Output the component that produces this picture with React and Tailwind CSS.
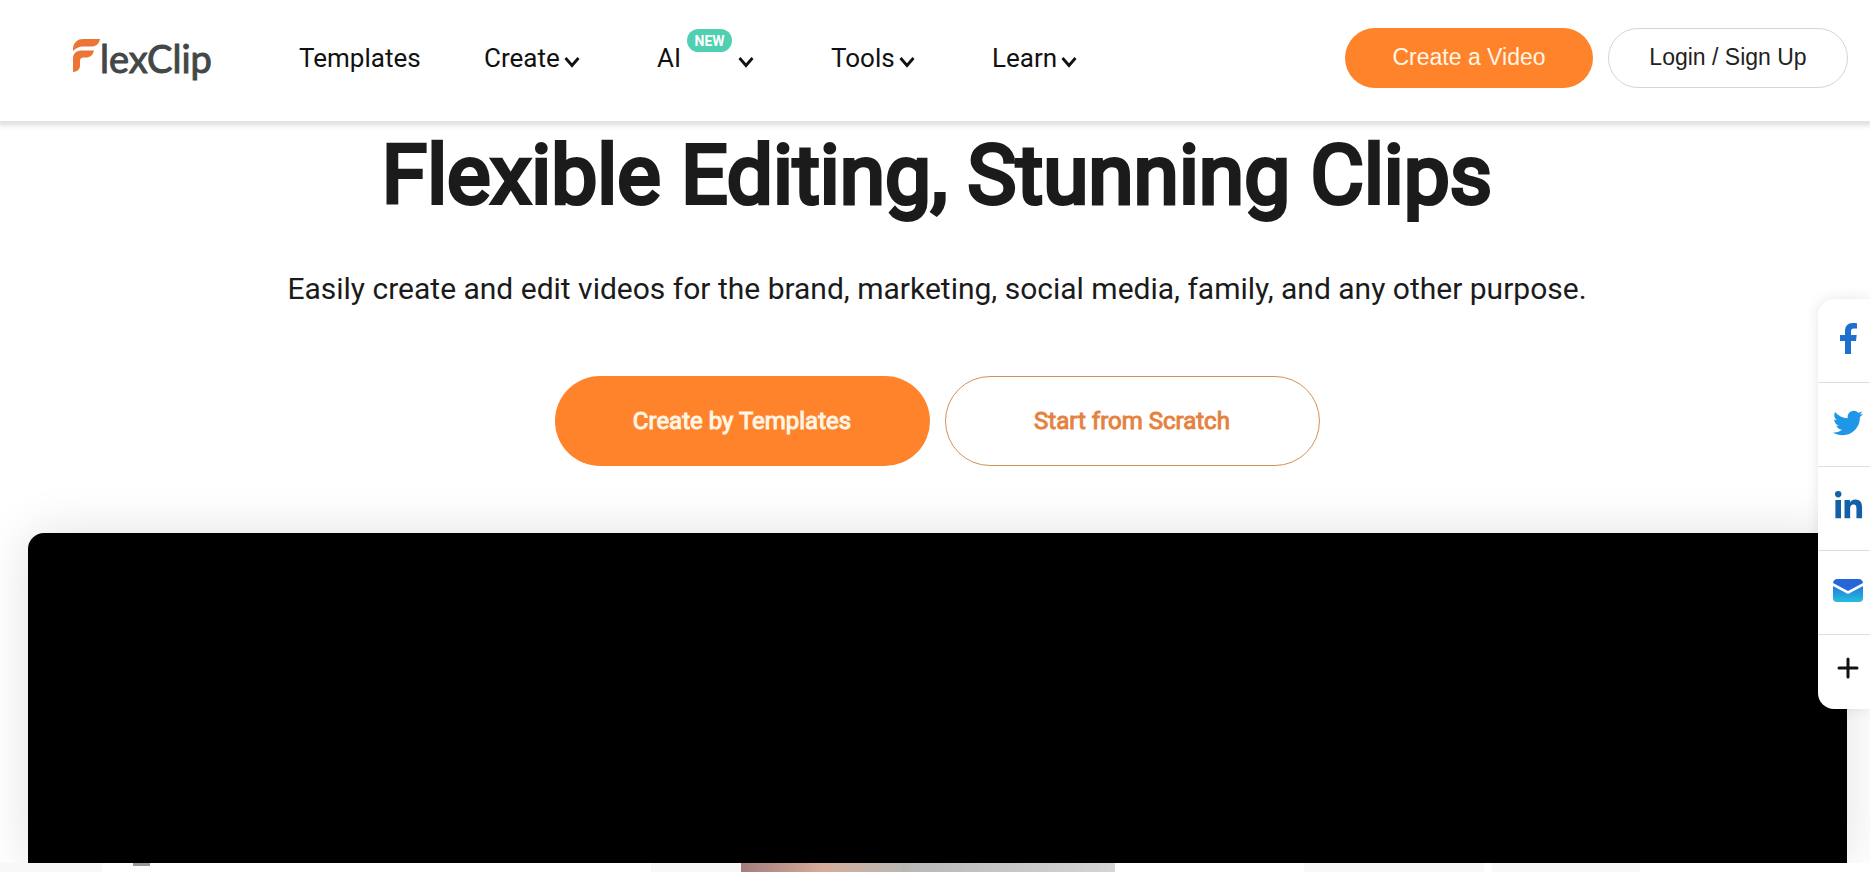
import { FaTwitter, FaLinkedinIn } from "react-icons/fa";

const menus = [
  { name: "Create", width: "w-[173px]" },
  { name: "AI", width: "w-[174px]", isNew: true },
  { name: "Tools", width: "w-[161px]" },
  { name: "Learn", width: "w-[86px]" },
];

const Chevron = () => (
  <svg className="w-4 h-3 mt-2" viewBox="0 0 16 12" fill="none" stroke="#111" strokeWidth="2.8">
    <path d="M1.5 2 8 9.5 14.5 2" />
  </svg>
);

const Logo = () => (
  <a href="#" aria-label="FlexClip" className="flex items-start w-[226px] shrink-0 text-[#434847]">
    <svg className="w-[27px] h-[34px] mt-[5px]" viewBox="0 0 27 34" fill="#ec7434">
      <path d="M0 12V9C1 3 5 0 10 0h17c-1 5-4 7.500-9 7.500h-8C6 7.500 3 9 0 12Z" />
      <path d="M0 33V20c0-5 3-8.500 8-8.500h13c-1 4.500-4 7-8 7h-2c-3 0-4 1-4 4V27c0 3-3 6-7 6Z" />
    </svg>
    <span className="font-[Lato,sans-serif] text-[38px] leading-[48px] [-webkit-text-stroke:1px_#434847]">lexClip</span>
  </a>
);

const FacebookIcon = () => (
  <svg className="w-[17px] h-[31px]" viewBox="0 0 17 31" fill="#1f6fd0">
    <path d="M5 31V18H0v-6h5V8c0-5 3-8 7.500-8 2 0 3.500.2 4.500.3V5.500h-3c-2.400 0-3 1.100-3 3V12h5.700L16 18h-5v13H5Z" />
  </svg>
);

const MailIcon = () => (
  <svg className="w-[30px] h-6" viewBox="0 0 30 24">
    <defs>
      <linearGradient id="mail" x1="0" y1="0" x2="0" y2="1">
        <stop offset="0" stopColor="#2878dc" />
        <stop offset="1" stopColor="#20c0dc" />
      </linearGradient>
    </defs>
    <path d="M0 4c0-2 2-4 4-4h22c2 0 4 2 4 4L15 12 0 4Z" fill="#2866d8" />
    <path d="M0 7l15 8 15-8v12c0 3-2 4-4 4H4c-2 0-4-1-4-4V7Z" fill="url(#mail)" />
  </svg>
);

const PlusIcon = () => (
  <svg className="w-[22px] h-[22px]" viewBox="0 0 22 22" stroke="#111" strokeWidth="3" strokeLinecap="round">
    <path d="M11 2v18M2 11h18" />
  </svg>
);

const shares = [
  { label: "Facebook", icon: <FacebookIcon /> },
  { label: "Twitter", icon: <FaTwitter className="w-[30px] h-[30px] text-[#1f97e6]" /> },
  { label: "LinkedIn", icon: <FaLinkedinIn className="w-[31px] h-[31px] text-[#1260a8]" /> },
  { label: "Email", icon: <MailIcon /> },
];

const Header = () => (
  <header className="relative z-10 flex items-start h-[121px] pl-[73px] pr-[22px] bg-white shadow-[0_3px_4px_2px_#e2e3e2]">
    <div className="pt-[34px]">
      <Logo />
    </div>
    <nav className="flex pt-[42px] text-[26px] leading-8 text-[#111]">
      <a href="#" className="w-[185px]">Templates</a>
      {menus.map((menu) => (
        <div key={menu.name} className={menu.width}>
          <button type="button" className="flex items-center gap-1 whitespace-nowrap">
            {menu.name}
            {menu.isNew && (
              <span className="-mt-9 mx-0.5 w-[45px] h-[23px] rounded-full bg-[#50d0b0] text-white text-sm leading-6 font-bold text-center">
                NEW
              </span>
            )}
            <Chevron />
          </button>
        </div>
      ))}
    </nav>
    <div className="flex gap-[15px] ml-auto pt-7 font-['Liberation_Sans',Arial,sans-serif] text-[23px]">
      <button type="button" className="w-[248px] h-[60px] pb-0.5 rounded-full bg-[#ff832b] text-[#fff6e6]">
        Create a Video
      </button>
      <button type="button" className="w-[240px] h-[60px] pb-0.5 rounded-full border border-[#d5d5d5] bg-white text-[#222]">
        Login / Sign Up
      </button>
    </div>
  </header>
);

const ShareBar = () => (
  <aside className="absolute z-20 right-0 top-[299px] w-[52px] rounded-l-2xl bg-white shadow-[0_0_14px_rgba(0,0,0,0.1)]">
    {shares.map((share) => (
      <a
        key={share.label}
        href="#"
        aria-label={share.label}
        className="flex items-center justify-center h-[84px] pl-2 pb-1 border-b border-[#dedede]"
      >
        {share.icon}
      </a>
    ))}
    <button type="button" aria-label="More" className="flex items-center justify-center w-full h-[74px] pl-2 pb-2">
      <PlusIcon />
    </button>
  </aside>
);

const Hero = () => (
  <section className="flex flex-col items-center pt-2.5 pb-[67px] pl-1 text-center">
    <h1 className="text-[82px] leading-[88px] font-normal text-[#1b1b1c] [-webkit-text-stroke:4px_#1b1b1c]">
      Flexible Editing, Stunning Clips
    </h1>
    <p className="mt-[50px] text-[30px] leading-10 text-[#1b1b1c]">
      Easily create and edit videos for the brand, marketing, social media, family, and any other purpose.
    </p>
    <div className="flex gap-[15px] mt-[67px] text-2xl">
      <button
        type="button"
        className="w-[375px] h-[90px] rounded-full bg-[#ff832b] text-[#fff6e6] [-webkit-text-stroke:1px_#fff6e6]"
      >
        Create by Templates
      </button>
      <button
        type="button"
        className="w-[375px] h-[90px] rounded-full border border-[#cf935c] bg-white text-[#e5823f] [-webkit-text-stroke:1px_#e5823f]"
      >
        Start from Scratch
      </button>
    </div>
  </section>
);

// tops of the template cards that follow the video
const TemplateStrip = () => (
  <div className="flex h-[9px] bg-[#f8f8f8]">
    <div className="w-[549px] ml-[102px] mr-[90px] pl-[31px] bg-white">
      <div className="w-[17px] h-[3px] bg-[#999]" />
    </div>
    <div className="w-[374px] bg-linear-to-r from-[#a88080] via-[#b8b8b6] via-45% to-[#d4d6d7]">
      <div className="w-[160px] h-full bg-linear-to-r from-[#a47d7e] via-[#d5ac98] to-[#bbb7b5]" />
    </div>
    <div className="w-[189px] bg-white" />
    <div className="w-2 ml-[180px] mr-[148px] bg-white" />
    <div className="flex-1 bg-white" />
  </div>
);

const App = () => {
  return (
    <div className="relative min-h-screen overflow-hidden bg-white font-[Roboto,sans-serif]">
      <Header />
      <main>
        <Hero />
        <div className="pl-7 pr-[23px]">
          <div className="h-[330px] rounded-t-2xl bg-black shadow-[0_0_50px_rgba(0,0,0,0.12)]" />
        </div>
        <div className="relative">
          <TemplateStrip />
        </div>
      </main>
      <ShareBar />
    </div>
  );
};

export default App;
